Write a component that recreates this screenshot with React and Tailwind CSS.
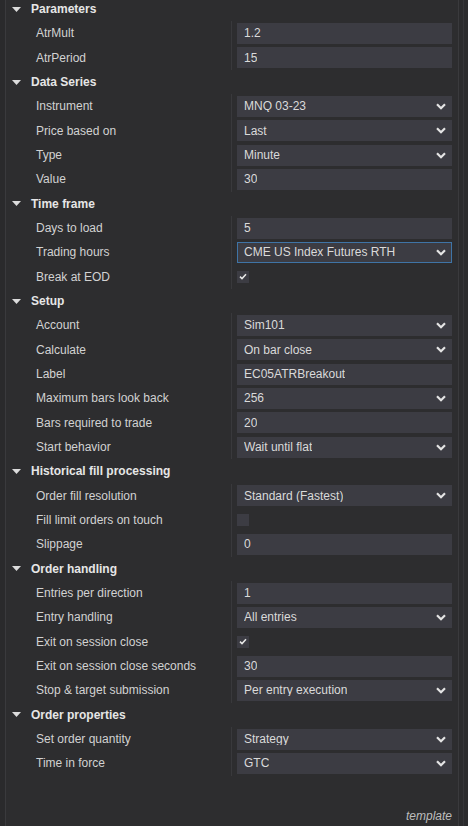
import React from "react";

const sections = [
  {
    title: "Parameters",
    rows: [
      { label: "AtrMult", type: "text", value: "1.2" },
      { label: "AtrPeriod", type: "text", value: "15" },
    ],
  },
  {
    title: "Data Series",
    rows: [
      { label: "Instrument", type: "select", value: "MNQ 03-23" },
      { label: "Price based on", type: "select", value: "Last" },
      { label: "Type", type: "select", value: "Minute" },
      { label: "Value", type: "text", value: "30" },
    ],
  },
  {
    title: "Time frame",
    rows: [
      { label: "Days to load", type: "text", value: "5" },
      { label: "Trading hours", type: "select", value: "CME US Index Futures RTH", focused: true },
      { label: "Break at EOD", type: "check", checked: true },
    ],
  },
  {
    title: "Setup",
    rows: [
      { label: "Account", type: "select", value: "Sim101" },
      { label: "Calculate", type: "select", value: "On bar close" },
      { label: "Label", type: "text", value: "EC05ATRBreakout" },
      { label: "Maximum bars look back", type: "select", value: "256" },
      { label: "Bars required to trade", type: "text", value: "20" },
      { label: "Start behavior", type: "select", value: "Wait until flat" },
    ],
  },
  {
    title: "Historical fill processing",
    rows: [
      { label: "Order fill resolution", type: "select", value: "Standard (Fastest)" },
      { label: "Fill limit orders on touch", type: "check", checked: false },
      { label: "Slippage", type: "text", value: "0" },
    ],
  },
  {
    title: "Order handling",
    rows: [
      { label: "Entries per direction", type: "text", value: "1" },
      { label: "Entry handling", type: "select", value: "All entries" },
      { label: "Exit on session close", type: "check", checked: true },
      { label: "Exit on session close seconds", type: "text", value: "30" },
      { label: "Stop & target submission", type: "select", value: "Per entry execution" },
    ],
  },
  {
    title: "Order properties",
    rows: [
      { label: "Set order quantity", type: "select", value: "Strategy" },
      { label: "Time in force", type: "select", value: "GTC" },
    ],
  },
];

const Chevron = () => (
  <svg width="10" height="7" viewBox="0 0 10 7" className="shrink-0">
    <polyline points="1,1.2 5,5.2 9,1.2" fill="none" stroke="#e4e4e4" strokeWidth="2.2" />
  </svg>
);

const Check = () => (
  <svg width="8" height="7" viewBox="0 0 8 7">
    <polyline points="1,3.6 3,5.6 7,1.2" fill="none" stroke="#e8e8e8" strokeWidth="1.5" />
  </svg>
);

const Value = ({ row }) => {
  if (row.type === "check") {
    return (
      <div className="w-[12px] h-[12px] bg-[#3c3c43] flex items-center justify-center">
        {row.checked && <Check />}
      </div>
    );
  }
  return (
    <div
      className={
        "h-[21px] w-full bg-[#3c3c43] flex items-center justify-between " +
        (row.focused ? "border border-[#3f74a6] pl-[6px] pr-[5px]" : "pl-[7px] pr-[6px]")
      }
    >
      <span className="truncate">{row.value}</span>
      {row.type === "select" && <Chevron />}
    </div>
  );
};

const Header = ({ title }) => (
  <div className="h-[24.33px] flex items-center">
    <svg width="9" height="5" viewBox="0 0 9 5" className="ml-[6px] mr-[10px]">
      <polygon points="0,0 9,0 4.5,5" fill="#dcdcdc" />
    </svg>
    <span className="font-bold text-[#e6e6e6]">{title}</span>
  </div>
);

const Row = ({ row }) => (
  <div className="h-[24.33px] flex">
    <div className="w-[226px] border-r border-[#39393c] flex items-center pl-[30px] text-[#d2d2d2]">
      {row.label}
    </div>
    <div className="flex-1 flex items-center pl-[5px] pr-[6px] text-[#dadada]">
      <Value row={row} />
    </div>
  </div>
);

export default function App() {
  return (
    <div
      className="w-[468px] h-[826px] bg-[#2d2d2f] flex overflow-hidden text-[12px] leading-none"
      style={{ fontFamily: '"Liberation Sans", Arial, sans-serif' }}
    >
      <div className="w-[6px] bg-[#2a2a2c] border-r border-[#3a3a3d] shrink-0" />
      <div className="flex-1 flex flex-col">
        <div className="flex-1 -mt-[3px]">
          {sections.map((s) => (
            <div key={s.title}>
              <Header title={s.title} />
              {s.rows.map((r) => (
                <Row key={r.label} row={r} />
              ))}
            </div>
          ))}
        </div>
        <div className="h-[22px] flex items-start justify-end pr-[6px] pt-[6px]">
          <span className="italic text-[#bdbdbd]">template</span>
        </div>
      </div>
      <div className="w-[10px] shrink-0 border-l border-[#3a3a3d] flex">
        <div className="w-[4px] bg-[#2b2b2d]" />
        <div className="w-[1px] bg-[#353538]" />
        <div className="flex-1 bg-[#2b2b2d]" />
      </div>
    </div>
  );
}
